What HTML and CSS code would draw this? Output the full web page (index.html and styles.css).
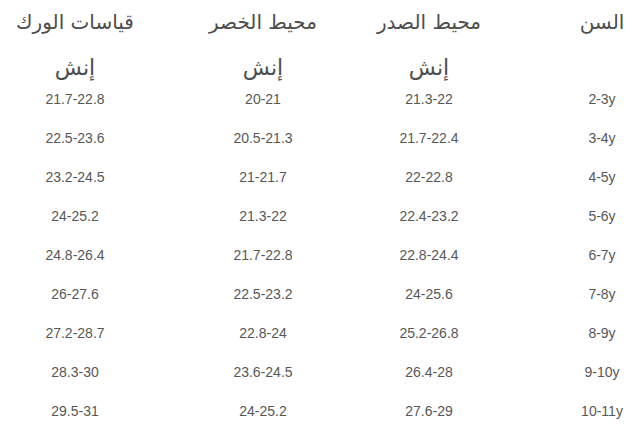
FILE: index.html
```html
<!DOCTYPE html>
<html lang="ar" dir="rtl">
<head>
<meta charset="utf-8">
<link rel="stylesheet" href="styles.css">
</head>
<body>
<div class="chart">
  <div class="row head">
    <div class="cell age">السن</div>
    <div class="cell chest">محيط الصدر</div>
    <div class="cell waist">محيط الخصر</div>
    <div class="cell hip">قياسات الورك</div>
  </div>
  <div class="row unit">
    <div class="cell age"></div>
    <div class="cell chest">إنش</div>
    <div class="cell waist">إنش</div>
    <div class="cell hip">إنش</div>
  </div>
  <div class="row data"><div class="cell age">2-3y</div><div class="cell chest">21.3-22</div><div class="cell waist">20-21</div><div class="cell hip">21.7-22.8</div></div>
  <div class="row data"><div class="cell age">3-4y</div><div class="cell chest">21.7-22.4</div><div class="cell waist">20.5-21.3</div><div class="cell hip">22.5-23.6</div></div>
  <div class="row data"><div class="cell age">4-5y</div><div class="cell chest">22-22.8</div><div class="cell waist">21-21.7</div><div class="cell hip">23.2-24.5</div></div>
  <div class="row data"><div class="cell age">5-6y</div><div class="cell chest">22.4-23.2</div><div class="cell waist">21.3-22</div><div class="cell hip">24-25.2</div></div>
  <div class="row data"><div class="cell age">6-7y</div><div class="cell chest">22.8-24.4</div><div class="cell waist">21.7-22.8</div><div class="cell hip">24.8-26.4</div></div>
  <div class="row data"><div class="cell age">7-8y</div><div class="cell chest">24-25.6</div><div class="cell waist">22.5-23.2</div><div class="cell hip">26-27.6</div></div>
  <div class="row data"><div class="cell age">8-9y</div><div class="cell chest">25.2-26.8</div><div class="cell waist">22.8-24</div><div class="cell hip">27.2-28.7</div></div>
  <div class="row data"><div class="cell age">9-10y</div><div class="cell chest">26.4-28</div><div class="cell waist">23.6-24.5</div><div class="cell hip">28.3-30</div></div>
  <div class="row data"><div class="cell age">10-11y</div><div class="cell chest">27.6-29</div><div class="cell waist">24-25.2</div><div class="cell hip">29.5-31</div></div>
</div>
</body>
</html>
```
FILE: styles.css
```css
html, body {
  margin: 0;
  padding: 0;
  background: #ffffff;
}
.chart {
  width: 632px;
  padding-top: 6px;
  color: #575757;
}
.row {
  display: flex;
  flex-direction: row;
  align-items: center;
}
.cell {
  text-align: center;
  white-space: nowrap;
  flex: none;
}
.age { width: 60px; }
.chest { width: 120px; margin-right: 83px; }
.waist { width: 120px; margin-right: 46px; }
.hip { width: 120px; margin-right: 68px; }
.head {
  height: 32px;
  font-family: "DejaVu Sans", sans-serif;
  font-size: 20px;
  color: #4d4d4d;
}
.unit {
  height: 42px;
  align-items: flex-end;
  line-height: 24px;
  font-family: "DejaVu Sans", sans-serif;
  font-size: 22px;
  color: #4d4d4d;
}
.data {
  height: 38.9px;
  font-family: "Liberation Sans", Arial, sans-serif;
  font-size: 14px;
}
```
